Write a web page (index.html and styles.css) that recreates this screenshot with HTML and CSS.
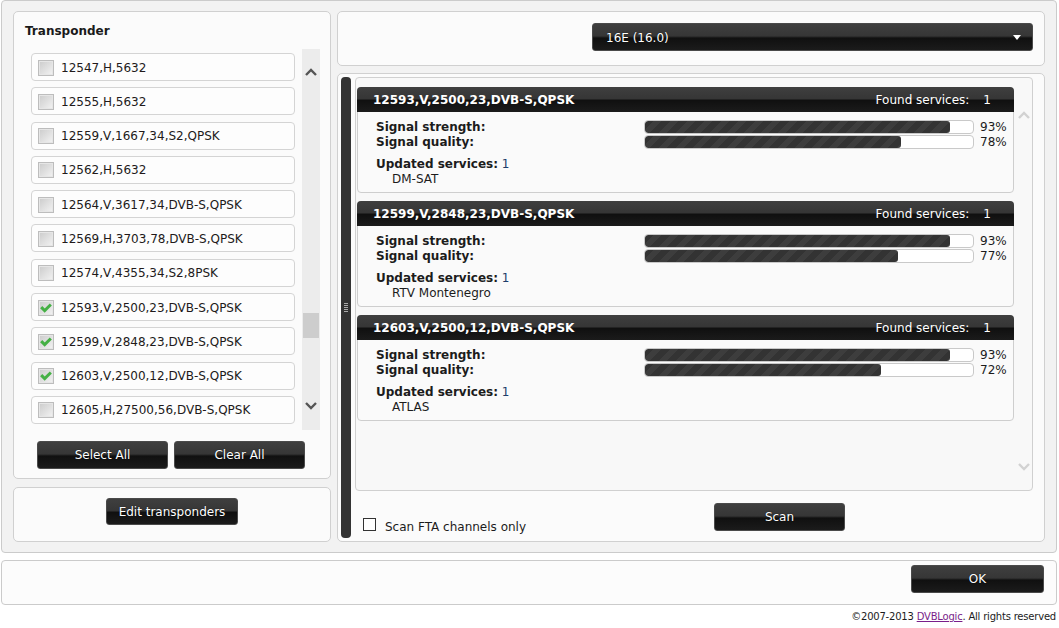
FILE: index.html
```html
<!DOCTYPE html>
<html lang="en">
<head>
  <meta charset="UTF-8">
  <title>Scan transponders</title>
  <link rel="stylesheet" href="styles.css">
</head>
<body>

<div class="window">
  <div class="col-left">
    <div class="panel transponders">
      <h2>Transponder</h2>
      <div class="list-wrap">
        <div class="list">
          <div class="item"><span class="cb"></span>12547,H,5632</div>
          <div class="item"><span class="cb"></span>12555,H,5632</div>
          <div class="item"><span class="cb"></span>12559,V,1667,34,S2,QPSK</div>
          <div class="item"><span class="cb"></span>12562,H,5632</div>
          <div class="item"><span class="cb"></span>12564,V,3617,34,DVB-S,QPSK</div>
          <div class="item"><span class="cb"></span>12569,H,3703,78,DVB-S,QPSK</div>
          <div class="item"><span class="cb"></span>12574,V,4355,34,S2,8PSK</div>
          <div class="item"><span class="cb checked"><svg viewBox="0 0 16 16"><polyline points="2.5,7 6.5,11 13.5,4"/></svg></span>12593,V,2500,23,DVB-S,QPSK</div>
          <div class="item"><span class="cb checked"><svg viewBox="0 0 16 16"><polyline points="2.5,7 6.5,11 13.5,4"/></svg></span>12599,V,2848,23,DVB-S,QPSK</div>
          <div class="item"><span class="cb checked"><svg viewBox="0 0 16 16"><polyline points="2.5,7 6.5,11 13.5,4"/></svg></span>12603,V,2500,12,DVB-S,QPSK</div>
          <div class="item"><span class="cb"></span>12605,H,27500,56,DVB-S,QPSK</div>
        </div>
        <div class="vscroll">
          <svg class="arrow up" viewBox="0 0 14 12"><polyline points="2,9 7,4 12,9"/></svg>
          <div class="thumb"></div>
          <svg class="arrow down" viewBox="0 0 14 12"><polyline points="2,3 7,8 12,3"/></svg>
        </div>
      </div>
      <div class="btn-row">
        <button class="btn">Select All</button>
        <button class="btn">Clear All</button>
      </div>
    </div>
    <div class="panel edit">
      <button class="btn edit-btn">Edit transponders</button>
    </div>
  </div>

  <div class="col-right">
    <div class="panel sat">
      <div class="dropdown btn">16E (16.0)<span class="caret"></span></div>
    </div>
    <div class="panel scan">
      <div class="splitter"><span class="grip"></span></div>
      <div class="scan-main">
        <div class="results">
          <div class="cards">
            <div class="card">
              <div class="card-head"><span class="tp">12593,V,2500,23,DVB-S,QPSK</span><span>Found services:<b>1</b></span></div>
              <div class="card-body">
                <div class="row"><span class="lbl">Signal strength:</span><div class="bar"><div class="fill" style="width:93%"></div></div><span class="pct">93%</span></div>
                <div class="row"><span class="lbl">Signal quality:</span><div class="bar"><div class="fill" style="width:78%"></div></div><span class="pct">78%</span></div>
                <div class="updated"><span class="lbl">Updated services:</span> <span class="num">1</span></div>
                <div class="service">DM-SAT</div>
              </div>
            </div>
            <div class="card">
              <div class="card-head"><span class="tp">12599,V,2848,23,DVB-S,QPSK</span><span>Found services:<b>1</b></span></div>
              <div class="card-body">
                <div class="row"><span class="lbl">Signal strength:</span><div class="bar"><div class="fill" style="width:93%"></div></div><span class="pct">93%</span></div>
                <div class="row"><span class="lbl">Signal quality:</span><div class="bar"><div class="fill" style="width:77%"></div></div><span class="pct">77%</span></div>
                <div class="updated"><span class="lbl">Updated services:</span> <span class="num">1</span></div>
                <div class="service">RTV Montenegro</div>
              </div>
            </div>
            <div class="card">
              <div class="card-head"><span class="tp">12603,V,2500,12,DVB-S,QPSK</span><span>Found services:<b>1</b></span></div>
              <div class="card-body">
                <div class="row"><span class="lbl">Signal strength:</span><div class="bar"><div class="fill" style="width:93%"></div></div><span class="pct">93%</span></div>
                <div class="row"><span class="lbl">Signal quality:</span><div class="bar"><div class="fill" style="width:72%"></div></div><span class="pct">72%</span></div>
                <div class="updated"><span class="lbl">Updated services:</span> <span class="num">1</span></div>
                <div class="service">ATLAS</div>
              </div>
            </div>
          </div>
          <div class="vscroll light">
            <svg class="arrow up" viewBox="0 0 14 12"><polyline points="2,9 7,4 12,9"/></svg>
            <svg class="arrow down" viewBox="0 0 14 12"><polyline points="2,3 7,8 12,3"/></svg>
          </div>
        </div>
        <div class="scan-row">
          <label class="fta"><span class="box"></span><span class="fta-text">Scan FTA channels only</span></label>
          <button class="btn scan-btn">Scan</button>
        </div>
      </div>
    </div>
  </div>
</div>

<div class="footer">
  <button class="btn ok-btn">OK</button>
</div>
<div class="copyright">©2007-2013 <a href="#">DVBLogic</a>. All rights reserved</div>

</body>
</html>
```

FILE: styles.css
```css
* {
  margin: 0; padding: 0; box-sizing: border-box;
}
body {
  font-family: 'DejaVu Sans', Verdana, sans-serif;
  font-size: 12px;
  color: #1c1c1c;
  background: #fff;
}

.window {
  width: 1056px;
  height: 553px;
  margin-left: 1px;
  border: 1px solid #cbcbcb;
  border-radius: 4px;
  background: #f2f2f2;
  padding: 10px 11px;
  display: flex;
  gap: 6px;
}

.panel {
  background: #fbfbfb;
  border: 1px solid #d0d0d0;
  border-radius: 5px;
}

/* black gradient buttons */
.btn {
  font-family: 'DejaVu Sans', Verdana, sans-serif;
  font-size: 12px;
  color: #fff;
  background: linear-gradient(to bottom, #3f3f3f 0%, #363636 46%, #101010 54%, #1b1b1b 100%);
  border: 1px solid #4a4a4a;
  border-radius: 3px;
  height: 28px;
  text-shadow: 0 0 1px #000;
}

/* left column */
.col-left {
  width: 318px;
  display: flex;
  flex-direction: column;
  gap: 8px;
}
.transponders {
  height: 468px;
  padding: 12px 10px 0 11px;
}
.transponders h2 {
  font-size: 12px;
  line-height: 14px;
  font-weight: bold;
  color: #1a1a1a;
}
.list-wrap {
  display: flex;
  gap: 7px;
  margin: 11px 0 0 6px;
  height: 381px;
}
.list {
  width: 264px;
  padding-top: 4px;
  display: flex;
  flex-direction: column;
  gap: 6.3px;
}
.item {
  height: 28px;
  border: 1px solid #d4d4d4;
  border-radius: 4px;
  background: #fdfdfd;
  display: flex;
  align-items: center;
  padding: 1px 0 0 6px;
  gap: 7px;
  font-size: 12px;
  color: #221a1a;
}
.cb {
  width: 16px;
  height: 16px;
  border: 1px solid #bdbdbd;
  background: linear-gradient(135deg, #cbcbcb, #f3f3f3);
  box-shadow: inset 0 0 0 1px #e6e6e6;
  flex: none;
}
.cb svg {
  display: block;
  width: 14px;
  height: 14px;
}
.cb svg polyline {
  fill: none;
  stroke: #45b045;
  stroke-width: 3.4;
}

.vscroll {
  width: 18px;
  background: #ececec;
  display: flex;
  flex-direction: column;
  align-items: center;
  padding-top: 17px;
}
.arrow {
  width: 14px;
  height: 12px;
  flex: none;
}
.arrow polyline {
  fill: none;
  stroke: #555;
  stroke-width: 2.4;
}
.vscroll .thumb {
  width: 16px;
  height: 25px;
  background: #cdcdcd;
  margin-top: 235px;
}
.vscroll .down {
  margin-top: 62px;
}

.btn-row {
  display: flex;
  gap: 6px;
  margin: 11px 0 0 12px;
}
.btn-row .btn {
  width: 131px;
}

.edit {
  flex: 1;
  display: flex;
  justify-content: center;
  padding-top: 10px;
}
.edit-btn {
  width: 132px;
  height: 27px;
}

/* right column */
.col-right {
  flex: 1;
  display: flex;
  flex-direction: column;
  gap: 7px;
}
.sat {
  height: 55px;
  display: flex;
  justify-content: flex-end;
  padding: 11px 11px 0 0;
}
.dropdown {
  width: 441px;
  display: flex;
  align-items: center;
  justify-content: space-between;
  padding: 1px 11px 0 13px;
}
.caret {
  width: 0;
  height: 0;
  border-left: 4px solid transparent;
  border-right: 4px solid transparent;
  border-top: 5px solid #fff;
}

.scan {
  flex: 1;
  display: flex;
  gap: 4px;
  padding: 3px 11px 3px 3px;
}
.splitter {
  width: 10px;
  background: #333;
  border-radius: 4px;
  display: flex;
  align-items: center;
  justify-content: center;
}
.grip {
  width: 4px;
  height: 10px;
  background: repeating-linear-gradient(to bottom, #aaa 0 1px, transparent 1px 2px);
}
.scan-main {
  flex: 1;
  display: flex;
  flex-direction: column;
}
.results {
  height: 414px;
  border: 1px solid #d0d0d0;
  border-radius: 4px;
  background: #f8f8f8;
  display: flex;
  padding: 9px 0 0 1px;
}
.cards {
  width: 657px;
  display: flex;
  flex-direction: column;
  gap: 8px;
}
.card {
  height: 106px;
  border: 1px solid #cecece;
  border-radius: 4px;
  background: #fafafa;
}
.card-head {
  height: 25px;
  margin: -1px -1px 0;
  border-radius: 4px 4px 0 0;
  background: linear-gradient(to bottom, #3f3f3f 0%, #363636 46%, #101010 54%, #1b1b1b 100%);
  color: #fff;
  display: flex;
  align-items: center;
  justify-content: space-between;
  padding: 1px 23px 0 16px;
}
.card-head .tp {
  font-weight: bold;
  font-size: 12px;
}
.card-head b {
  font-weight: normal;
  margin-left: 14px;
}
.card-body {
  padding: 7px 6px 0 18px;
  line-height: 15px;
}
.row {
  display: grid;
  grid-template-columns: 268px 330px auto;
  align-items: center;
}
.row .lbl {
  position: relative;
  top: 1px;
}
.lbl {
  font-weight: bold;
}
.bar {
  height: 14px;
  border: 1px solid #c9c9c9;
  border-radius: 4px;
  background: #fff;
  overflow: hidden;
}
.fill {
  height: 100%;
  border-radius: 3px;
  background: repeating-linear-gradient(135deg, #333 0 6px, #3d3d3d 6px 12px);
}
.pct {
  padding-left: 6px;
  position: relative;
  top: 1px;
}
.updated {
  margin-top: 8px;
}
.num {
  color: #1d3d6b;
}
.service {
  padding-left: 16px;
}

.vscroll.light {
  width: 17px;
  margin-left: 1px;
  background: none;
  padding-top: 22px;
}
.vscroll.light .arrow polyline {
  stroke: #d2d2d2;
}
.vscroll.light .down {
  margin-top: auto;
  margin-bottom: 17px;
}

.scan-row {
  display: flex;
  padding-left: 8px;
}
.fta {
  width: 351px;
  margin-top: 27px;
  display: flex;
  align-items: flex-start;
  gap: 9px;
  font-size: 12px;
  height: 15px;
}
.fta .box {
  width: 13px;
  height: 13px;
  border: 1px solid #333;
  background: #fff;
}
.fta-text {
  line-height: 15px;
  margin-top: 2px;
}
.scan-btn {
  width: 131px;
  margin-top: 12px;
}

/* footer */
.footer {
  width: 1056px;
  height: 45px;
  margin: 7px 0 0 1px;
  border: 1px solid #cbcbcb;
  border-radius: 4px;
  background: #fcfcfc;
  display: flex;
  justify-content: flex-end;
  padding: 4px 12px 0 0;
}
.ok-btn {
  width: 133px;
}
.copyright {
  width: 1057px;
  text-align: right;
  font-size: 10px;
  letter-spacing: -0.2px;
  line-height: 14px;
  margin-top: 5px;
  padding-right: 1px;
}
.copyright a {
  color: #7a1f8a;
}
```
